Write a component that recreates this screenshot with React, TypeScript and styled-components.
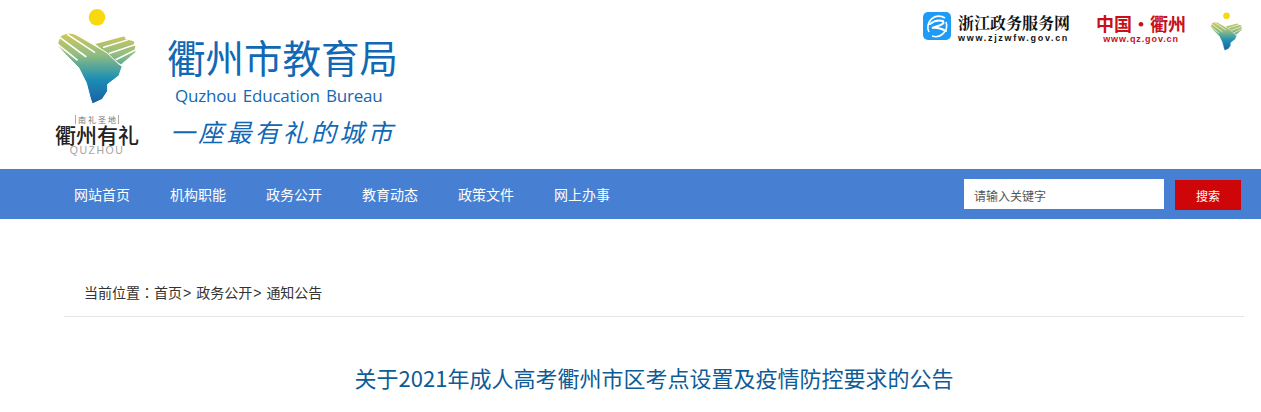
import React, { FC } from "react";
import styled, { createGlobalStyle } from "styled-components";

const CJK = `"Noto Sans CJK SC", "Liberation Sans", sans-serif`;

const GlobalStyle = createGlobalStyle`
  html, body {
    margin: 0;
    padding: 0;
    background: #fff;
    font-family: ${CJK};
    overflow: hidden;
  }
`;

const Page = styled.div`
  width: 1261px;
  height: 412px;
  overflow: hidden;
`;

const Header = styled.header`
  height: 169px;
  display: flex;
  justify-content: space-between;
  align-items: flex-start;
`;

const Brand = styled.div`
  display: flex;
  align-items: flex-start;
  padding-left: 52px;
`;

const LogoColumn = styled.div`
  width: 90px;
  display: flex;
  flex-direction: column;
  align-items: center;
  padding-top: 8px;
`;

const LogoTag = styled.div`
  margin-top: 10px;
  font-size: 8px;
  line-height: 9px;
  color: #777;
  letter-spacing: 2px;
  border-left: 1px solid #aaa;
  border-right: 1px solid #aaa;
  padding: 0 0 0 2px;
`;

const LogoName = styled.div`
  font-size: 21px;
  font-weight: 500;
  line-height: 20px;
  color: #222;
  white-space: nowrap;
`;

const LogoPinyin = styled.div`
  font-family: "Liberation Sans", sans-serif;
  font-size: 10.5px;
  line-height: 11px;
  letter-spacing: 1.5px;
  margin-top: 1px;
  color: #a5a5a5;
`;

const BrandText = styled.div`
  margin-left: 25px;
  padding-top: 31px;
  color: #1168b4;
`;

const Title = styled.div`
  font-size: 38.5px;
  line-height: 50px;
  white-space: nowrap;
`;

const EnglishTitle = styled.div`
  font-family: "Open Sans", sans-serif;
  font-size: 17px;
  font-weight: 500;
  line-height: 24px;
  margin: 3px 0 0 8px;
  white-space: nowrap;
  word-spacing: 2px;
  letter-spacing: -0.2px;
`;

const Slogan = styled.div`
  font-weight: 400;
  font-style: italic;
  font-size: 25px;
  line-height: 32px;
  letter-spacing: 3.2px;
  margin: 7px 0 0 3px;
  white-space: nowrap;
`;

const Partners = styled.div`
  display: flex;
  align-items: flex-start;
  padding: 12px 18px 0 0;
`;

const PartnerZj = styled.div`
  display: flex;
  gap: 7px;
  margin-right: 26px;
`;

const PartnerText = styled.div<{ $color: string; $center?: boolean }>`
  color: ${(p) => p.$color};
  text-align: ${(p) => (p.$center ? "center" : "left")};
`;

const PartnerName = styled.div<{ $size: number; $serif?: boolean }>`
  font-family: ${(p) =>
    p.$serif ? `"Noto Serif CJK SC", "Noto Sans CJK SC", sans-serif` : CJK};
  font-weight: 700;
  font-size: ${(p) => p.$size}px;
  line-height: 21px;
  white-space: nowrap;
`;

const PartnerUrl = styled.div<{ $spacing: number }>`
  font-family: "Liberation Sans", sans-serif;
  font-weight: 700;
  font-size: 9px;
  line-height: 11px;
  letter-spacing: ${(p) => p.$spacing}px;
  white-space: nowrap;
`;

const PartnerQz = styled.div`
  margin-right: 24px;
  padding-top: 1px;
`;

const Nav = styled.nav`
  height: 50px;
  background: #4780d2;
  display: flex;
  align-items: center;
  justify-content: space-between;
  padding: 0 20px 0 54px;
`;

const NavList = styled.div`
  display: flex;
`;

const NavItem = styled.a`
  padding: 0 20px;
  color: #fff;
  font-size: 14px;
  line-height: 50px;
  white-space: nowrap;
`;

const SearchForm = styled.div`
  display: flex;
  align-items: flex-start;
  gap: 11px;
`;

const SearchInput = styled.div`
  width: 190px;
  height: 30px;
  padding-left: 10px;
  background: #fff;
  color: #555;
  font-size: 12px;
  line-height: 33px;
`;

const SearchButton = styled.div`
  width: 66px;
  height: 30px;
  margin-top: 1px;
  background: #cf0609;
  color: #fff;
  font-size: 12px;
  line-height: 32px;
  text-align: center;
`;

const Content = styled.main`
  margin: 0 17px 0 64px;
`;

const Crumbs = styled.div`
  height: 98px;
  box-sizing: border-box;
  border-bottom: 1px solid #e5e5e5;
  padding: 62px 0 0 20px;
  color: #333;
  font-size: 14px;
  line-height: 22px;
  white-space: nowrap;
`;

const CrumbColon = styled.span`
  font-family: "Noto Sans CJK TC", sans-serif;
`;

const CrumbGap = styled.span`
  margin: 0 5px 0 1px;
  font-family: "Liberation Sans", sans-serif;
`;

const ArticleTitle = styled.h1`
  margin: 44px 0 0;
  color: #0e5b96;
  font-size: 22px;
  font-weight: 400;
  line-height: 32px;
  text-align: center;
  white-space: nowrap;
`;

const Emblem: FC<{ id: string; width: number; height: number }> = ({ id, width, height }) => (
  <svg width={width} height={height} viewBox="20 10 240 292" style={{ display: "block" }}>
    <defs>
      <linearGradient id={id} gradientUnits="userSpaceOnUse" x1="0" y1="85" x2="0" y2="298">
        <stop offset="0" stopColor="#d2c75a" />
        <stop offset="0.3" stopColor="#93bd80" />
        <stop offset="0.65" stopColor="#1c8fb4" />
        <stop offset="1" stopColor="#1a5fa5" />
      </linearGradient>
    </defs>
    <circle cx="140" cy="38" r="25" fill="#f8d90f" />
    <path
      fill={`url(#${id})`}
      d="M135 118 L220 96 Q228 98 224 103 L248 109 Q255 112 251 117 L252 122 Q258 125 254 130 L254 136 Q259 139 255 143 L212 180 L190 165 Z"
    />
    <path
      fill="none"
      stroke="#fff"
      strokeWidth="4.5"
      strokeLinecap="round"
      d="M160 128 L232 106 M178 146 L262 118 M198 165 L262 133"
    />
    <path
      fill={`url(#${id})`}
      stroke="#fff"
      strokeWidth="3"
      d="M62 86 Q70 86 80 92 L135 124 L170 145 L205 178 L216 186 L206 214 L190 226 L172 240 L172 260 L156 285 L126 299 L120 282 L108 236 L85 190 L45 150 L24 126 Q20 112 26 104 Q28 92 38 90 Q50 84 62 86 Z"
    />
    <path
      fill="none"
      stroke="#fff"
      strokeWidth="5"
      strokeLinecap="round"
      d="M52 90 L132 143 M30 100 L106 156 M20 118 L80 166"
    />
  </svg>
);

const ZjIcon: FC = () => (
  <svg width="28" height="28" viewBox="0 0 28 28" style={{ display: "block" }}>
    <rect width="28" height="28" rx="5" fill="#1e9bf7" />
    <path
      d="M6 20 A11 11 0 0 1 22 6 M23 10 A11 11 0 0 1 9 24"
      fill="none"
      stroke="#fff"
      strokeWidth="1.6"
    />
    <path
      d="M7 12 Q13 7 20 9 Q22 12 15 14 L9 16 Q15 15 23 19"
      fill="none"
      stroke="#fff"
      strokeWidth="2"
      strokeLinecap="round"
    />
  </svg>
);

const menu = ["网站首页", "机构职能", "政务公开", "教育动态", "政策文件", "网上办事"];

const App: FC = () => {
  return (
    <Page>
      <GlobalStyle />
      <Header>
        <Brand>
          <LogoColumn>
            <Emblem id="emblemBig" width={80} height={97} />
            <LogoTag>南礼圣地</LogoTag>
            <LogoName>衢州有礼</LogoName>
            <LogoPinyin>QUZHOU</LogoPinyin>
          </LogoColumn>
          <BrandText>
            <Title>衢州市教育局</Title>
            <EnglishTitle>Quzhou Education Bureau</EnglishTitle>
            <Slogan>一座最有礼的城市</Slogan>
          </BrandText>
        </Brand>
        <Partners>
          <PartnerZj>
            <ZjIcon />
            <PartnerText $color="#111">
              <PartnerName $size={16} $serif>
                浙江政务服务网
              </PartnerName>
              <PartnerUrl $spacing={1.7}>www.zjzwfw.gov.cn</PartnerUrl>
            </PartnerText>
          </PartnerZj>
          <PartnerQz>
            <PartnerText $color="#c9101a" $center>
              <PartnerName $size={18}>中国・衢州</PartnerName>
              <PartnerUrl $spacing={0.9}>www.qz.gov.cn</PartnerUrl>
            </PartnerText>
          </PartnerQz>
          <Emblem id="emblemSmall" width={33} height={39} />
        </Partners>
      </Header>
      <Nav>
        <NavList>
          {menu.map((item) => (
            <NavItem key={item}>{item}</NavItem>
          ))}
        </NavList>
        <SearchForm>
          <SearchInput>请输入关键字</SearchInput>
          <SearchButton>搜索</SearchButton>
        </SearchForm>
      </Nav>
      <Content>
        <Crumbs>
          当前位置<CrumbColon>：</CrumbColon>首页<CrumbGap>&gt;</CrumbGap>政务公开<CrumbGap>&gt;</CrumbGap>通知公告
        </Crumbs>
        <ArticleTitle>关于2021年成人高考衢州市区考点设置及疫情防控要求的公告</ArticleTitle>
      </Content>
    </Page>
  );
};

export default App;
